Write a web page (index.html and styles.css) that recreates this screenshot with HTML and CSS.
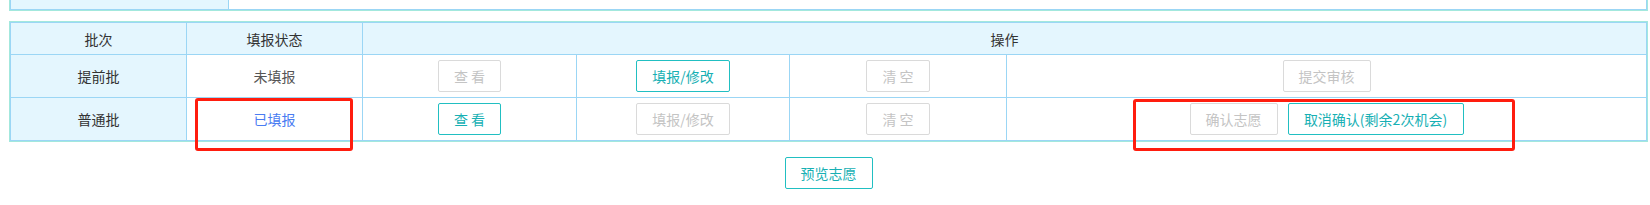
FILE: index.html
```html
<!DOCTYPE html>
<html lang="zh-CN">
<head>
  <meta charset="UTF-8">
  <meta name="viewport" content="width=device-width, initial-scale=1.0">
  <title>志愿填报</title>
  <link rel="stylesheet" href="styles.css">
</head>
<body>
  <!-- tail of the info table above -->
  <div class="summary">
    <div class="summary-row">
      <div class="summary-label"></div>
      <div class="summary-value"></div>
    </div>
  </div>

  <div class="batch-wrap">
    <table class="batch-table">
      <colgroup>
        <col style="width: 176px">
        <col style="width: 176px">
        <col style="width: 214px">
        <col style="width: 213px">
        <col style="width: 217px">
        <col>
      </colgroup>
      <thead>
        <tr>
          <th>批次</th>
          <th>填报状态</th>
          <th colspan="4">操作</th>
        </tr>
      </thead>
      <tbody>
        <tr>
          <td class="batch-name">提前批</td>
          <td class="status">未填报</td>
          <td><button class="btn" disabled>查 看</button></td>
          <td><button class="btn btn-primary">填报/修改</button></td>
          <td><button class="btn" disabled>清 空</button></td>
          <td><button class="btn" disabled>提交审核</button></td>
        </tr>
        <tr>
          <td class="batch-name">普通批</td>
          <td class="status status-done">已填报</td>
          <td><button class="btn btn-primary">查 看</button></td>
          <td><button class="btn" disabled>填报/修改</button></td>
          <td><button class="btn" disabled>清 空</button></td>
          <td>
            <div class="btn-group">
              <button class="btn" disabled>确认志愿</button>
              <button class="btn btn-primary btn-wide">取消确认(剩余2次机会)</button>
            </div>
          </td>
        </tr>
      </tbody>
    </table>
  </div>

  <div class="preview-bar">
    <button class="btn btn-primary">预览志愿</button>
  </div>

  <!-- red annotation marks -->
  <div class="mark mark-status"></div>
  <div class="mark mark-confirm"></div>
</body>
</html>
```

FILE: styles.css
```css
body {
  margin: 0;
  padding: 0;
  position: relative;
  background: #fff;
  font-family: "Noto Sans CJK SC", "Noto Sans", sans-serif;
  font-size: 14px;
  color: #333;
}
.summary {
  margin: 0 2px 0 9px;
  border: 1px solid #a3e8dd;
  border-top: none;
}
.summary-row {
  display: flex;
  height: 9px;
  border: 1px solid #9bd6f5;
  border-top: none;
}
.summary-label {
  width: 217px;
  background: #e4f6fe;
  border-right: 1px solid #9bd6f5;
}
.summary-value {
  flex: 1;
}
.batch-wrap {
  margin: 10px 2px 0 9px;
  border: 1px solid #a3e8dd;
}
.batch-table {
  width: 100%;
  border-collapse: collapse;
  table-layout: fixed;
}
.batch-table th,
.batch-table td {
  border: 1px solid #9bd6f5;
  text-align: center;
  vertical-align: middle;
  padding: 0;
  font-weight: normal;
}
.batch-table th {
  height: 31px;
  background: #e4f6fe;
  color: #333;
}
.batch-table td {
  height: 42px;
}
.batch-table td.batch-name {
  background: #e4f6fe;
  color: #333;
}
.status {
  color: #555;
}
.status-done {
  color: #4a7cf2;
}
.btn {
  display: inline-block;
  box-sizing: border-box;
  height: 32px;
  line-height: 30px;
  padding: 0 15px;
  font-family: inherit;
  font-size: 14px;
  background: #fff;
  border: 1px solid #21bfc2;
  border-radius: 2px;
  color: #17b0b4;
  cursor: pointer;
  white-space: nowrap;
}
.btn:disabled {
  border-color: #dadada;
  color: #c4c4c4;
  cursor: default;
}
.btn-wide {
  width: 176px;
  padding: 0;
}
.btn-group {
  display: flex;
  justify-content: center;
  gap: 10px;
}
.preview-bar {
  display: flex;
  justify-content: center;
  margin: 15px 2px 0 9px;
}
.mark {
  position: absolute;
  box-sizing: border-box;
  border: 3px solid #ff1d0e;
  border-radius: 3px;
}
.mark-status {
  left: 195px;
  top: 98px;
  width: 158px;
  height: 53px;
}
.mark-confirm {
  left: 1133px;
  top: 99px;
  width: 382px;
  height: 52px;
}
```
